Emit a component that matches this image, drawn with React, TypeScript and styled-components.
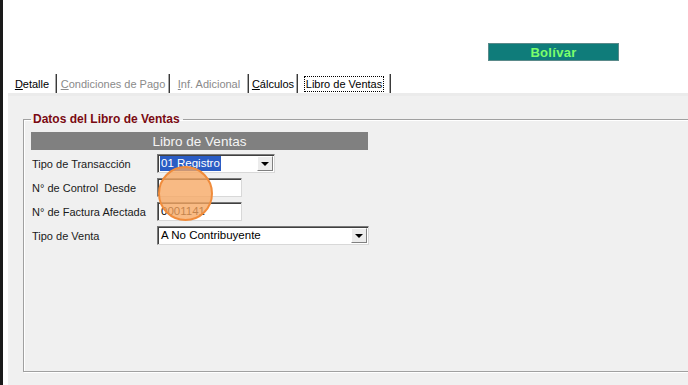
import styled, { createGlobalStyle } from "styled-components";

const GlobalStyle = createGlobalStyle`
  body {
    margin: 0;
    background: #ffffff;
    font-family: "Liberation Sans", Arial, sans-serif;
  }
`;

const Window = styled.div`
  position: relative;
  width: 688px;
  height: 385px;
  display: flex;
  flex-direction: column;
  overflow: hidden;
  border-left: 3px solid #1a1a1a;
  box-shadow: inset 1px 0 0 #ffffff;
  box-sizing: border-box;
  background: #ffffff;
`;

const TopArea = styled.div`
  height: 73px;
  display: flex;
  justify-content: flex-end;
  align-items: flex-start;
  padding: 43px 69px 0 0;
  box-sizing: border-box;
`;

const Badge = styled.div`
  width: 131px;
  height: 18px;
  background: #0f7c7a;
  border: 1px solid #5a8a8a;
  box-sizing: border-box;
  color: #7cff6c;
  font-weight: bold;
  font-size: 13px;
  display: flex;
  align-items: center;
  justify-content: center;
  letter-spacing: 0.3px;
`;

const TabStrip = styled.div`
  height: 20px;
  display: flex;
  align-items: flex-end;
  padding-left: 5px;
`;

const Tab = styled.div<{ $w: number; $disabled?: boolean; $active?: boolean }>`
  width: ${p => p.$w}px;
  flex-shrink: 0;
  height: 19px;
  box-sizing: border-box;
  display: flex;
  align-items: center;
  justify-content: center;
  white-space: nowrap;
  font-size: 11px;
  color: ${p => (p.$disabled ? "#8a8a8a" : "#000000")};
  border-right: 1px solid #3a3a3a;
  box-shadow: inset -1px 0 0 #a8a8a8;
  & > span {
    padding: 1px 1px;
    border: 1px dotted ${p => (p.$active ? "#000" : "transparent")};
  }
  u {
    text-decoration: underline;
  }
`;

const Page = styled.div`
  flex: 1;
  margin-left: 5px;
  background: #f0f0f0;
  border-top: 3px solid #ebebeb;
  padding: 16px 0 0 15px;
  box-sizing: border-box;
`;

const Group = styled.fieldset`
  margin: 0;
  width: 700px;
  height: 260px;
  box-sizing: border-box;
  border: 1px solid #a0a0a0;
  box-shadow: inset 1px 1px 0 #ffffff, 1px 1px 0 #ffffff;
  padding: 6px 0 0 7px;
`;

const Legend = styled.legend`
  color: #7a0a12;
  font-weight: bold;
  font-size: 12px;
  padding: 0 3px 0 2px;
  margin-left: 0;
`;

const HeaderBar = styled.div`
  width: 337px;
  height: 18px;
  background: #808080;
  color: #f4f4f4;
  font-size: 13.5px;
  display: flex;
  align-items: center;
  justify-content: center;
  margin-bottom: 4px;
`;

const Form = styled.div`
  display: grid;
  grid-template-columns: 126px auto;
  row-gap: 5px;
  align-items: center;
`;

const Label = styled.div`
  font-size: 11px;
  color: #1a1a1a;
  padding-left: 1px;
  white-space: pre;
`;

const Field = styled.div<{ $w: number }>`
  width: ${p => p.$w}px;
  height: 19px;
  box-sizing: border-box;
  background: #ffffff;
  border: 1px solid;
  border-color: #7a7a7a #d8d8d8 #d8d8d8 #7a7a7a;
  box-shadow: inset 1px 1px 0 #404040;
  display: flex;
  align-items: center;
  font-size: 11.5px;
  color: #000;
  padding-left: 2px;
`;

const Value = styled.span<{ $selected?: boolean }>`
  flex: 1;
  display: flex;
  & > span {
    background: ${p => (p.$selected ? "#2a5cc4" : "transparent")};
    color: ${p => (p.$selected ? "#ffffff" : "#000000")};
    padding: 0 1px;
    line-height: 15px;
  }
`;

const DropButton = styled.div`
  width: 16px;
  height: 15px;
  margin-right: 1px;
  background: #ececec;
  border: 1px solid;
  border-color: #ffffff #808080 #808080 #ffffff;
  box-sizing: border-box;
  display: flex;
  align-items: center;
  justify-content: center;
  &::after {
    content: "";
    border-left: 4px solid transparent;
    border-right: 4px solid transparent;
    border-top: 4px solid #000;
  }
`;

const CursorMark = styled.div`
  position: absolute;
  left: 155px;
  top: 166px;
  width: 55px;
  height: 55px;
  border-radius: 50%;
  background: rgba(246, 166, 98, 0.78);
  border: 2px solid #f08c3c;
  box-sizing: border-box;
`;

export default function App() {
  return (
    <>
      <GlobalStyle />
      <Window>
        <TopArea>
          <Badge>Bolívar</Badge>
        </TopArea>
        <TabStrip>
          <Tab $w={49}>
            <span>
              <u>D</u>etalle
            </span>
          </Tab>
          <Tab $w={113} $disabled>
            <span>
              <u>C</u>ondiciones de Pago
            </span>
          </Tab>
          <Tab $w={79} $disabled>
            <span>
              <u>I</u>nf. Adicional
            </span>
          </Tab>
          <Tab $w={49}>
            <span>
              <u>C</u>álculos
            </span>
          </Tab>
          <Tab $w={93} $active>
            <span>Libro de Ventas</span>
          </Tab>
        </TabStrip>
        <Page>
          <Group>
            <Legend>Datos del Libro de Ventas</Legend>
            <HeaderBar>Libro de Ventas</HeaderBar>
            <Form>
              <Label>Tipo de Transacción</Label>
              <Field $w={118}>
                <Value $selected>
                  <span>01 Registro</span>
                </Value>
                <DropButton />
              </Field>
              <Label>N° de Control  Desde</Label>
              <Field $w={85} />
              <Label>N° de Factura Afectada</Label>
              <Field $w={85}>
                <Value>
                  <span>0001141</span>
                </Value>
              </Field>
              <Label>Tipo de Venta</Label>
              <Field $w={212}>
                <Value>
                  <span>A No Contribuyente</span>
                </Value>
                <DropButton />
              </Field>
            </Form>
          </Group>
        </Page>
        <CursorMark />
      </Window>
    </>
  );
}
